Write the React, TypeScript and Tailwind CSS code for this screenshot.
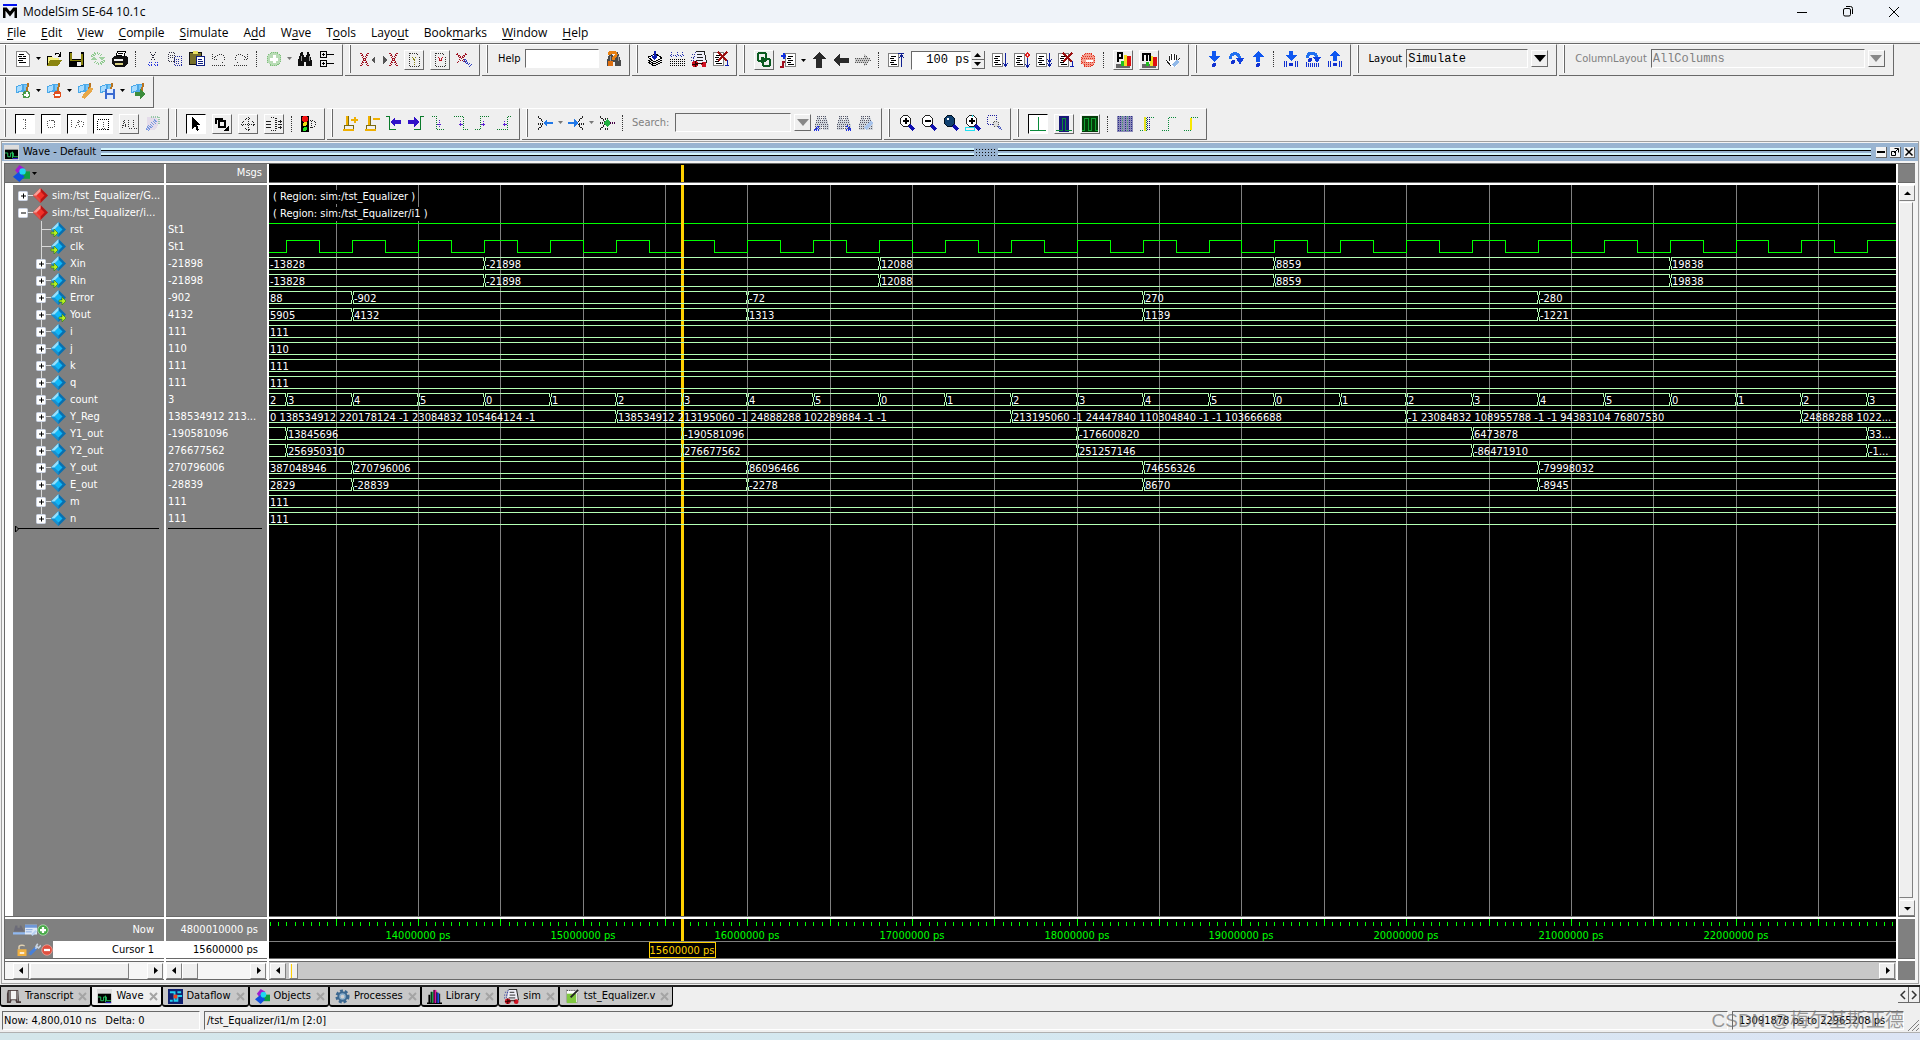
import type { ReactNode } from 'react';
import { clsx } from 'clsx';

type Stroke = { d: string; c?: string; w?: number; dots?: boolean };

const L = ({ d, c = '#000', w = 1, dots }: Stroke) => (
  <path d={d} fill="none" stroke={c} strokeWidth={w} strokeDasharray={dots ? '1 1' : undefined} />
);
const F = ({ d, c = '#000' }: { d: string; c?: string }) => <path d={d} fill={c} />;

const Page = ({ x = 1 }: { x?: number }) => (
  <>
    <rect x={x + 0.5} y="1.5" width="10" height="13" fill="#fff" stroke="#808080" />
    <L d={`M${x + 3} 4.5h5M${x + 2} 6.5h4M${x + 3} 8.5h5M${x + 2} 10.5h4M${x + 3} 12.5h6`} />
  </>
);
const Flag = () => (
  <>
    <F d="M1 3l7-2 5 0v7l-6 1-6 1z" c="#4aa8e8" />
    <F d="M2 4l5-2v5l-5 2z" c="#a8dcff" />
    <F d="M9 2l3 0v5l-3 0z" c="#78c4f4" />
    <L d="M13.500 0L10.500 12" c="#b87420" w={2} />
  </>
);
const Lens = () => (
  <>
    <L d="M10 10l5 5" c="#1010b0" w={3} />
    <circle cx="6.500" cy="6" r="5.500" fill="#fff" stroke="#222" />
  </>
);
const Cart = () => (
  <>
    <F d="M5 1h8l2 10H3z" c="#f0f0fa" />
    <L d="M5 .500h9M13.500 1l2 11M6 3.500h5M6 6.500h6M5 9.500h7" c="#222" />
    <L d="M4.500 1L2 11M1 3.500h3M0 6.500h3M0 9.500h2" c="#3038a0" dots />
    <circle cx="4" cy="13" r="3" fill="#d01020" />
    <circle cx="13" cy="13.500" r="2.500" fill="#d01020" />
    <L d="M4 12.500h8M4 10v6M1 13.500h6" c="#300" />
  </>
);
const Binoc = ({ c = '#111', dots = false }) => (
  <>
    <F d="M4 1h2v3h1v2h2V4h1V1h2l3 9v5H9v-4H7v4H1v-5z" c={dots ? '#d0d6dc' : c} />
    {dots && <L d="M3 1.500h10M3 3.500h10M2 5.500h12M2 7.500h12M1 9.500h14M1 11.500h14M1 13.500h14" c="#556" dots />}
    {!dots && <L d="M4.500 5v5M12.500 5v5" c="#999" />}
  </>
);
const Edge = ({ d, arrow }: { d: string; arrow: string }) => (
  <>
    <L d={d} c="#0a7a2a" dots />
    <L d={arrow} c="#5a20d0" dots />
    <L d="M7 9.500h4" c="#5a20d0" />
  </>
);
const Shapes = () => (
  <>
    <F d="M6 0l5 3-6 6-3-4z" c="#a21cd0" />
    <F d="M8 6h8v7H8z" c="#10a040" />
    <F d="M6 6l5 5-5 5-6-5z" c="#1050e0" />
    <circle cx="9" cy="6" r="3" fill="#20d8f0" />
  </>
);
const WaveGlyph = () => (
  <>
    <F d="M0 0h16v16H0z" c="#dcdcdc" />
    <F d="M1 5h14v10H1z" />
    <L d="M1 8.500h3v4h3v-4h3v4h5M9 7v7" c="#28c864" />
    <L d="M9 14.500h6" c="#3020e0" />
  </>
);

const ICONS: Record<string, ReactNode> = {
  page: <><F d="M1 0h10l4 4v12H1z" c="#fff" /><L d="M1.500 0v15.500H14.500V4L11 .500H1" c="#888" /><L d="M4 3.500h5M3 5.500h4M8 5.500h3M4 7.500h7M3 9.500h5M4 11.500h7" /></>,
  open: <><F d="M1 5h5l1 2h6v2H5l-3 5H1z" c="#f4f080" /><F d="M4 9h12l-4 6H1z" c="#8a8410" /><L d="M1.500 14V5.500h4M9 3.500c2-2 4-1 5 1M14.500 1v4h-3" /></>,
  save: <><F d="M1 1h15v15H1z" /><F d="M2 2h2v7H2zM13 3h2v11h-2z" c="#8a8410" /><F d="M4 1h9v7H4z" c="#efefef" /><F d="M2 9h13v1H2z" c="#8a8410" /><F d="M9 11h4v4H9z" c="#efefef" /></>,
  reload: <><L d="M2 6c2-5 8-4 9-1M14 9c-2 5-8 4-9 1" c="#8fcb8f" w={3} dots /><F d="M9 6h6l-3 4zM1 9h6L4 5z" c="#a0d0a0" /></>,
  print: <><F d="M5 1h8l-2 6H3z" c="#fff" /><L d="M5.500.500h8l-2 6h-8zM6 2.500h5M5 4.500h5" /><F d="M0 7l3-2h11l2 2v5l-3 4H3l-3-3z" c="#111" /><F d="M2 8h9v2H2z" c="#eee" /><F d="M3 12h8v2H3z" c="#d8d080" /></>,
  cut: <><L d="M5 1l5 9M11 1l-5 9" c="#223" dots /><L d="M3.500 11.500h3v3h-3zM9.500 11.500h3v3h-3z" c="#2030e0" dots /></>,
  copy: <><L d="M1.500 1.500h6v9h-6zM3 4.500h4M3 6.500h4" c="#334" dots /><L d="M7.500 5.500h7v9h-7zM9 8.500h4M9 10.500h4M9 12.500h4" c="#2028a0" dots /></>,
  paste: <><F d="M0 1h13v13H0z" c="#111" /><F d="M1 2h11v11H1z" c="#77702a" /><F d="M4 0h5v3H4z" c="#e8e060" /><F d="M7 5h9v10H7z" c="#102080" /><F d="M8 6h7v8H8z" c="#fff" /><L d="M9 8.500h4M9 10.500h5M9 12.500h5" c="#102080" /></>,
  undo: <><L d="M1.500 3v5h5M3 7c3-5 11-4 11 1 0 2-2 3-4 4" c="#333" dots /><L d="M1 14.500h14" c="#333" dots /></>,
  redo: <><L d="M14.500 3v5h-5M13 7C10 2 2 3 2 8c0 2 2 3 4 4" c="#333" dots /><L d="M1 14.500h14" c="#333" dots /></>,
  add: <><circle cx="8" cy="8" r="7" fill="#b9dcb6" stroke="#7fbf7c" strokeDasharray="1 1" /><L d="M8 4v8M4 8h8" c="#fff" w={3} /></>,
  find: <Binoc />,
  tree: <><L d="M1.500.500h6v6h-6zM1.500 9.500h6v6h-6zM4.500 2v3M3 3.500h3M4.500 11v3M3 12.500h3M8 3.500h7M8 12.500h7" /></>,
  xl: <><L d="M1 1l7 13M8 1L1 14" c="#a01020" dots w={2} /><F d="M15 4v8l-4-4z" c="#555" /></>,
  xr: <><L d="M8 1l7 13M15 1L8 14" c="#a01020" dots w={2} /><F d="M1 4v8l4-4z" c="#555" /></>,
  pageq: <><L d="M3.500 1.500h7l3 3v10h-10z" c="#333" dots /><L d="M6 5l2 3 2-3M8.500 8v5" c="#8a8410" dots /></>,
  pagex: <><L d="M3.500 1.500h7l3 3v10h-10z" c="#333" dots /><L d="M6 5l5 6M11 5l-5 6" c="#c01020" dots /></>,
  xpen: <><L d="M1 2l9 9M10 2L1 11" c="#a01020" w={2} dots /><L d="M8 8l7 6" c="#3040c0" w={3} dots /></>,
  helpfind: <><Binoc c="#4a4a4a" /><L d="M3 4c0-4 8-4 7 0 0 2-3 2-3 5" c="#e88010" w={3} /><F d="M2 10h5v5H2z" c="#e07010" /></>,
  layers: <><F d="M1 6l8-3 6 4-8 4z" c="#fff" /><L d="M1 6l8-3 6 4-8 4zM1 9l6 4 8-4M1 11l6 4 8-4" /><L d="M7.500 0v7M5 4.500l2.500 3 2.500-3" c="#1020b0" w={2} /></>,
  stack: <><L d="M2.500 1v4M8.500 1v4M13.500 1v4M1 4l2 2 2-2M6 4l2 2 2-2M11 4l2 2 2-2" c="#2030b0" dots /><L d="M1 8.500h15M1 10.500h15M1 12.500h15M1 14.500h15" dots /></>,
  cart: <Cart />,
  pageX: <><Page x={0} /><L d="M5 1l9 9M14 1L5 10" c="#9a1010" w={2} /><L d="M14.500 9v5M12 14.500h4" c="#1020b0" /></>,
  chain: <><rect x="2" y="1" width="8" height="8" rx="2" fill="none" stroke="#0a5a20" strokeWidth="2" /><rect x="7" y="7" width="7" height="7" rx="2" fill="none" stroke="#0a5a20" strokeWidth="2" /><path d="M5 5h3v2H6v4H5z" fill="#0a5a20" /></>,
  restartp: <><Page x={5} /><L d="M3.500 7V1M1 3.500h5" c="#1030e0" w={2} /><L d="M0 14.500h3v-5h2" c="#a01020" w={2} /></>,
  up: <F d="M8 0l7 7h-4v9H5V7H1z" c="#2a2a2a" />,
  left: <F d="M0 8l7-6v4h9v5H7v3z" c="#2a2a2a" />,
  rightdim: <><F d="M16 8L9 2v4H0v5h9v3z" c="#c8c8c8" /><L d="M0 6.500h15M1 8.500h15M0 10.500h14M9 4.500h3M9 12.500h3" c="#555" dots /></>,
  runtop: <><Page x={0} /><L d="M10 1.500h6M13.500 2v13M11 6l2.500-3 2.500 3" c="#102090" w={1} /></>,
  run: <><Page x={0} /><L d="M13.500 1v13M11 11l2.500 3 2.500-3" c="#1020a0" /></>,
  runc: <><Page x={0} /><L d="M13.500 6v9M11 12l2.500 3 2.500-3" c="#1020a0" /><L d="M13.500 1l2 2-2 2-2-2z" c="#e02020" /></>,
  runa: <><Page x={0} /><L d="M13.500 1v13M11 7l2.500 3 2.500-3M11 11l2.500 3 2.500-3" c="#1020a0" /></>,
  stop: <><circle cx="8" cy="8" r="7" fill="#f4a090" stroke="#e03020" strokeDasharray="1 1" /><L d="M3 4.500h10M2 6.500h12M2 10.500h12M4 12.500h8" c="#e03020" dots /><L d="M6 8.500h7" c="#fff" w={2} /></>,
  perf: <><F d="M1 12h14v4H1z" c="#666" /><F d="M6 9h3v5H6z" c="#20c020" /><F d="M9 3h3v11H9z" c="#f0e020" /><F d="M12 4h4v10h-4z" c="#e01010" /><L d="M3 10V1h4v5H3" w={2} /></>,
  mem: <><F d="M1 12h14v4H1z" c="#666" /><F d="M5 10h3v4H5z" c="#20c020" /><F d="M9 4h3v10H9z" c="#f0e020" /><F d="M12 5h4v9h-4z" c="#e01010" /><L d="M2 9V2h7v7M5.500 2v7" w={2} /></>,
  hand: <><F d="M4 8V3h2V1h2v1h2v1h2v5l2-2 1 1-3 6-2 2H6L1 9l1-1z" c="#fff" /><L d="M4 9V3.500M6.500 8V1.500M9 8V1.500M11.500 8V3M12 9l3-3M1 8l5 6" c="#222" /><L d="M8 14l5-5" c="#90b8e8" w={4} /></>,
  stepin: <><F d="M6 0h4v5h4l-6 6-6-6h4z" c="#1058f0" /><circle cx="8" cy="14" r="2" fill="#1030d0" /></>,
  stepover: <><L d="M2 8c1-7 9-7 10 0" c="#2070f0" w={3} /><F d="M8 7h8l-4 7z" c="#1040e0" /><circle cx="5" cy="11" r="2" fill="#1030d0" /></>,
  stepout: <><F d="M6 11h4V6h4L8 0 2 6h4z" c="#1058f0" /><circle cx="8" cy="14" r="2" fill="#1030d0" /></>,
  cin: <><F d="M6 0h4v4h4l-6 6-6-6h4z" c="#1058f0" /><L d="M1.500 10v6M3.500 10v6M12.500 10v6M14.500 10v6" c="#1030d0" /><circle cx="8" cy="13.500" r="2" fill="#1030d0" /></>,
  cover: <><L d="M2 7c1-7 9-6 10 0" c="#2070f0" w={3} /><F d="M8 6h8l-4 6z" c="#1040e0" /><circle cx="5" cy="9" r="2" fill="#1030d0" /><L d="M1.500 11v5M3.500 12v4M5.500 12v4M7.500 12v4M9.500 12v4M11.500 12v4M13.500 12v4" c="#1030d0" /></>,
  cout: <><F d="M6 10h4V5h4L8 0 2 5h4z" c="#1058f0" /><L d="M1.500 10v6M3.500 10v6M12.500 10v6M14.500 10v6" c="#1030d0" /><circle cx="8" cy="13.500" r="2" fill="#1030d0" /></>,
  bmadd: <><Flag /><circle cx="11.500" cy="11.500" r="4" fill="#4a9a48" /><L d="M11.500 9v5M9 11.500h5" c="#fff" w={2} /></>,
  bmdel: <><Flag /><circle cx="11.500" cy="11.500" r="4" fill="#e05020" /><L d="M9 11.500h5" c="#fff" w={2} /></>,
  bmedit: <><Flag /><L d="M6 15l9-10" c="#e8a848" w={4} /></>,
  bmsave: <><Flag /><F d="M6 6h10v10H6z" c="#3a6ad0" /><F d="M8 6h6v4H8zM8 12h6v4H8z" c="#e0ecff" /></>,
  bmgo: <><Flag /><F d="M5 9h5V6l6 5-6 5v-3H5z" c="#3c8c3c" /></>,
  fin: <L d="M6 3.500h4M8.500 4v8M6 12.500h4" c="#555" dots />,
  fout: <circle cx="8" cy="8" r="4" fill="none" stroke="#555" strokeDasharray="1 1" />,
  fio: <><L d="M2.500 4v8M6 12l4-8" c="#555" dots /><circle cx="12" cy="8" r="3" fill="none" stroke="#555" strokeDasharray="1 1" /></>,
  fint: <><L d="M2.500 3.500h11v10h-11z" dots /><L d="M8.500 6v6M7 12.500h3" c="#555" dots /></>,
  fall: <L d="M1 12l2-8 2 8M2 9.500h3M7.500 4v8h3M12.500 4v8h3" c="#333" dots />,
  fpen: <><F d="M2 1h8l5 5-5 8H2z" c="#e4dcea" /><L d="M2 14L11 4" c="#7898e0" w={4} dots /><L d="M6 1h8v8" c="#98c8a8" w={2} dots /></>,
  select: <F d="M4 1v12l3-3 2 5 2-1-2-5h4z" />,
  zoomsel: <><L d="M1.500 8V2.500H9" w={2} /><rect x="5" y="5" width="6" height="6" fill="none" stroke="#000" strokeWidth="2" /><F d="M15 9v6H9z" /></>,
  pan: <><L d="M8.500 1v14M1 8.500h14M5 4l3-3 3 3M5 12l3 3 3-3M4 5L1 8l3 3M12 5l3 3-3 3" c="#222" dots /></>,
  twocur: <><L d="M5 1.500h4v13H5M10.500 2v12" c="#222" dots /><L d="M0 5.500h5M0 8.500h5M0 11.500h5M12 5.500h4M12 8.500h4M12 11.500h4M14.500 4v3M14.500 10v3" c="#222" /></>,
  traffic: <><F d="M0 0h8v16H0z" /><circle cx="4" cy="3" r="3" fill="#f01010" /><circle cx="4" cy="8" r="2" fill="#f0e010" /><circle cx="4" cy="13" r="2" fill="#20e020" /><L d="M9 4.500h2c5 0 5 7 0 7H9M10.500 5v7" c="#222" dots /></>,
  curadd: <><L d="M6.500 1v9M2 10.500h9M2.500 10v4.500h9V10" c="#7a6a10" /><L d="M5 1v9M1 14.500h11M9 5h7M13 2v6" c="#f0b000" w={2} /></>,
  curdel: <><L d="M6.500 1v9M2 10.500h9M2.500 10v4.500h9V10" c="#7a6a10" /><L d="M5 1v9M1 14.500h11M9 4h7" c="#f0b000" w={2} /></>,
  prevt: <><L d="M0 1.500h3.500v13H10" c="#0a7a2a" /><F d="M4 7l5-5v3h6v4H9v3z" c="#3010c8" /></>,
  nextt: <><L d="M16 1.500h-3.500v13H6" c="#0a7a2a" /><F d="M11 7L6 2v3H0v4h6v3z" c="#3010c8" /></>,
  e1: <Edge d="M2 1.500h4.500v13h8" arrow="M9.500 5v7" />,
  e2: <Edge d="M2 1.500h9.500v13h4" arrow="M8.500 6v6" />,
  e3: <Edge d="M1 14.500h5.500v-13h8" arrow="M9.500 6v6" />,
  e4: <Edge d="M1 14.500h10.500v-13h4" arrow="M8.500 6v6" />,
  bl: <><L d="M1 2l5 4M1 8.500h5M1 14l5-4" c="#222" w={2} dots /><F d="M6 8l4-4v3h6v2h-6v3z" c="#2078e8" /></>,
  br: <><L d="M15 2l-5 4M15 14l-5-4M11 8.500h5" c="#222" w={2} dots /><F d="M10 8L6 4v3H0v2h6v3z" c="#2078e8" /></>,
  bb: <><L d="M1 2l5 4M1 14l5-4M1 8h4M6 3.500h4M6 13.500h4" c="#222" w={2} dots /><F d="M8 4l4 4-4 4-4-4z" c="#20b040" /><L d="M11 8h5" c="#404" w={2} dots /></>,
  sl: <><Binoc dots /><L d="M1 15l4-4M0 14.500h6" c="#2030e0" w={2} dots /></>,
  sr: <><Binoc dots /><L d="M11 11l4 4M10 14.500h6" c="#2030e0" w={2} dots /></>,
  sopt: <><Binoc dots /><L d="M7 14l7-7" c="#a8c4ec" w={4} /></>,
  zin: <><Lens /><L d="M6.500 3v6M4 6h6" w={2} /></>,
  zout: <><Lens /><L d="M4 6h6" w={2} /></>,
  zfull: <><Lens /><circle cx="6.500" cy="6" r="5.500" fill="#104070" stroke="#012" /><circle cx="5" cy="4" r="1" fill="#fff" /></>,
  zcur: <><Lens /><L d="M7 3v6M4 6h6" w={2} /><L d="M.500 12.500h9v3h-9zM7.500 0v2" c="#20e0f0" /></>,
  zsel: <><L d="M.500.500h9v9h-9z" c="#2020a0" dots /><L d="M10 10l5 5" c="#5060c0" w={2} dots /><circle cx="9" cy="9" r="3" fill="#ddd" stroke="#555" strokeDasharray="1 1" /></>,
  w1: <><F d="M0 0h16v16H0z" c="#fff" /><L d="M0 14.500h16M8.500 1v13" c="#0a8a3a" /></>,
  w2: <><F d="M3 0h10v16H3z" c="#181878" /><L d="M0 14.500h6.500v-12h3v12H16" c="#0a8a3a" /></>,
  w3: <><F d="M0 0h16v16H0z" c="#033c08" /><L d="M0 14.500h2.500v-12h4v12h3v-12h4v12H16" c="#10a030" /></>,
  w4: <><F d="M0 0h16v16H0z" c="#8c8cb8" /><L d="M1.500 0v16M3.500 0v16M8.500 0v16M12.500 0v16M14.500 0v16" c="#282888" dots /><L d="M5.500 0v16M10.500 0v16" c="#40a060" dots /></>,
  w5: <><L d="M1 14.500h6v-13h8" c="#0a8a3a" dots /><L d="M6 1v14" c="#e8e020" w={2} /><L d="M8.500 1v14M10.500 1v14" c="#202080" dots /></>,
  w6: <L d="M1 14.500h6.500v-13h8" c="#0a8a3a" dots />,
  w7: <><L d="M1 14.500h7v-13h7" c="#0a8a3a" dots /><L d="M8 2v12" c="#f8e800" w={2} /></>,
  wave: <WaveGlyph />,
  objects: <Shapes />,
  transcript: <><F d="M2 1h11l1 12h2v2h-5l-1-3H6l-1 3H1V5z" c="#4a3c3c" /><F d="M5 2h6v9H5z" c="#f4f4f4" /><L d="M3.500 2v11M12.500 2v11" c="#999" /></>,
  dataflow: <><F d="M0 0h16v16H0z" c="#102070" /><L d="M2 3.500h5v9h3v-5h5M2 12.500h3M10 3.500h4" c="#20d0f0" w={2} /><F d="M6 6h4v4H6z" c="#f04020" /></>,
  gear: <><circle cx="8" cy="8" r="6" fill="none" stroke="#3c6890" strokeWidth="3" strokeDasharray="3 2" /><circle cx="8" cy="8" r="4.500" fill="#8cb0cc" stroke="#3c6890" strokeWidth="2" /><circle cx="8" cy="8" r="2" fill="#d0d0d0" /></>,
  library: <><L d="M2.500 6v9M0 15.500h16" w={2} /><F d="M4 3h3v12H4z" c="#10a040" /><F d="M7 1h3v14H7z" c="#e010a0" /><F d="M10 4h3v11h-3z" c="#2050e0" /><L d="M4.500 3v12M7.500 1v14M10.500 3v12M13.500 5v10" /></>,
  file: <><F d="M1 1h13v14H1z" c="#fff" /><L d="M1.500.500v14h12V4" c="#999" /><F d="M2 5h10v10H2z" c="#80c840" /><L d="M6 9l8-8" c="#222" w={2} /><L d="M2 1.500h9" dots /></>,
  nowbin: <><F d="M3 2h3v3h3V2h2l4 8H1z" c="#6c6c78" /><L d="M0 12.500h16" c="#90b8f0" w={3} /></>,
  table: <><F d="M0 1h16v13H0z" c="#dfe9f8" /><F d="M0 1h16v4H0z" c="#6f98d8" /><L d="M1 7.500h9M1 10.500h8" c="#6f98d8" /><L d="M9 15l6-6" c="#b8d0f0" w={3} /></>,
  plus: <><circle cx="8" cy="8" r="7" fill="#48a848" stroke="#b8e0b8" /><L d="M8 4v8M4 8h8" c="#fff" w={3} /></>,
  lock: <><F d="M2 7h12v9H2z" c="#f0b040" /><L d="M4 7V4c0-3 7-3 7-1" c="#e0d0b0" w={2} /><L d="M5 12h6" c="#fff" w={2} /></>,
  wrench: <><L d="M2 14l8-8" c="#4880d8" w={4} /><L d="M9 7l3-3M12 1l-2 3 3 2 3-3" c="#c8d4e4" w={2} /></>,
  minus: <><circle cx="8" cy="8" r="7" fill="#e05040" stroke="#f0a8a0" /><L d="M4 8h8" c="#fff" w={3} /></>,
};

const Icon = ({ n, size = 16, crisp }: { n: string; size?: number; crisp?: boolean }) => (
  <svg
    viewBox="0 0 16 16"
    width={size}
    height={size}
    className="shrink-0"
    shapeRendering={crisp ? 'crispEdges' : 'auto'}
    aria-hidden="true"
  >
    {ICONS[n]}
  </svg>
);

/* ---- toolbar parts ---- */

const Tool = ({ n, label, box }: { n: string; label: string; box?: 'up' | 'down' }) => (
  <button
    type="button"
    aria-label={label}
    className={clsx(
      'flex h-5 shrink-0 items-center justify-center',
      box ? 'mx-[3px] w-5 border' : 'w-[22px]',
      box === 'up' && 'border-t-white border-l-white border-r-[#696969] border-b-[#696969]',
      box === 'down' && 'border-t-black border-l-black border-r-white border-b-white bg-white',
    )}
  >
    <Icon n={n} crisp />
  </button>
);

const Drop = ({ label, dim }: { label: string; dim?: boolean }) => (
  <button type="button" aria-label={label} className="flex h-5 w-[9px] shrink-0 items-center justify-center">
    <svg width="5" height="3" viewBox="0 0 5 3"><path d="M0 0h5L2.500 3z" fill={dim ? '#777' : '#000'} /></svg>
  </button>
);

const Sep = () => <span className="mr-[6px] ml-1 h-4 w-px shrink-0 border-l border-dotted border-[#333]" />;

const Group = ({ children, high }: { children: ReactNode; high?: boolean }) => (
  <div
    className={clsx(
      'mr-[2px] flex h-8 shrink-0 items-center border-t border-r border-b border-t-white border-r-[#696969] border-b-[#696969] pr-1',
      high && 'pb-[3px]',
    )}
  >
    <span className="mr-[6px] ml-1 h-7 w-[2px] shrink-0 self-start border-r border-l border-r-[#696969] border-l-white" />
    {children}
  </div>
);

const BigDrop = ({ label, dim }: { label: string; dim?: boolean }) => (
  <button
    type="button"
    aria-label={label}
    className="ml-[3px] flex h-[17px] w-[17px] shrink-0 items-center justify-center border border-t-white border-l-white border-r-[#696969] border-b-[#696969]"
  >
    <svg width="12" height="7" viewBox="0 0 12 7"><path d="M0 0h12L6 7z" fill={dim ? '#888' : '#000'} /></svg>
  </button>
);

const sunken = 'border border-t-[#696969] border-l-[#696969] border-r-white border-b-white';

/* ---- signals ---- */

type Signal = {
  name: string;
  value: string;
  dir?: 'in' | 'out';
  // [time in us, label] pairs, the first one opens the window
  bus?: [number, string][];
};

const T0 = 13.091878;
const T1 = 22.965208;
const WIDTH = 1626;
const px = (t: number) => Math.floor(((t - T0) / (T1 - T0)) * WIDTH);

const count: [number, string][] = [[T0, '2']];
for (let i = 0; i < 25; i++) count.push([13.2 + i * 0.4, String((i + 3) % 6)]);

const SIGNALS: Signal[] = [
  { name: 'rst', value: 'St1', dir: 'in' },
  { name: 'clk', value: 'St1', dir: 'in' },
  { name: 'Xin', value: '-21898', dir: 'in', bus: [[T0, '-13828'], [14.4, '-21898'], [16.8, '12088'], [19.2, '8859'], [21.6, '19838']] },
  { name: 'Rin', value: '-21898', dir: 'in', bus: [[T0, '-13828'], [14.4, '-21898'], [16.8, '12088'], [19.2, '8859'], [21.6, '19838']] },
  { name: 'Error', value: '-902', dir: 'out', bus: [[T0, '88'], [13.6, '-902'], [16, '-72'], [18.4, '270'], [20.8, '-280']] },
  { name: 'Yout', value: '4132', dir: 'out', bus: [[T0, '5905'], [13.6, '4132'], [16, '1313'], [18.4, '1139'], [20.8, '-1221']] },
  { name: 'i', value: '111', bus: [[T0, '111']] },
  { name: 'j', value: '110', bus: [[T0, '110']] },
  { name: 'k', value: '111', bus: [[T0, '111']] },
  { name: 'q', value: '111', bus: [[T0, '111']] },
  { name: 'count', value: '3', bus: count },
  {
    name: 'Y_Reg',
    value: '138534912 213...',
    bus: [
      [T0, '0 138534912 220178124 -1 23084832 105464124 -1'],
      [15.2, '138534912 213195060 -1 24888288 102289884 -1 -1'],
      [17.6, '213195060 -1 24447840 110304840 -1 -1 103666688'],
      [20, '-1 23084832 108955788 -1 -1 94383104 76807530'],
      [22.4, '24888288 1022...'],
    ],
  },
  { name: 'Y1_out', value: '-190581096', bus: [[T0, ''], [13.2, '13845696'], [15.6, '-190581096'], [18, '-176600820'], [20.4, '6473878'], [22.8, '33...']] },
  { name: 'Y2_out', value: '276677562', bus: [[T0, ''], [13.2, '256950310'], [15.6, '276677562'], [18, '251257146'], [20.4, '-86471910'], [22.8, '-1...']] },
  { name: 'Y_out', value: '270796006', bus: [[T0, '387048946'], [13.6, '270796006'], [16, '86096466'], [18.4, '74656326'], [20.8, '-79998032']] },
  { name: 'E_out', value: '-28839', bus: [[T0, '2829'], [13.6, '-28839'], [16, '-2278'], [18.4, '8670'], [20.8, '-8945']] },
  { name: 'm', value: '111', bus: [[T0, '111']] },
  { name: 'n', value: '111', bus: [[T0, '111']] },
];

const ROW = 17;
const CURSOR = px(15.6);

const Bus = ({ row, bus }: { row: number; bus: [number, string][] }) => {
  const top = row * ROW + 4.5;
  return (
    <g>
      {bus.map(([t, text], i) => {
        const a = i === 0 ? -1 : px(t);
        const b = i + 1 < bus.length ? px(bus[i + 1][0]) : 4000;
        const open = i === 0 ? `M0 ${top}` : `M${a + 1.5} ${top + 12}v-3l-1 -1v-4l1 -1v-3`;
        return (
          <g key={t}>
            <path
              d={`${open}H${b - 0.5}v3l1 1v4l-1 1v3H${i === 0 ? 0 : a + 1.5}`}
              fill="none"
              stroke="#b4ffb4"
            />
            <text x={a + 2} y={top + 10.5} fill="#fff">{text}</text>
          </g>
        );
      })}
    </g>
  );
};

const clockPath = () => {
  let d = 'M0 67.500';
  for (let t = 13.2; t < 23; t += 0.4) d += `H${px(t) + 0.5}V55.500H${px(t + 0.2) + 0.5}V67.500`;
  return d + 'H4000';
};

const gridTimes = Array.from({ length: 20 }, (_, i) => 13.5 + i * 0.5).filter((t) => t < T1);
const tickTimes = Array.from({ length: 198 }, (_, i) => Math.round((13.1 + i * 0.05) * 100) / 100);

const WaveCanvas = () => (
  <svg className="absolute inset-0 h-full w-full text-[11px]" shapeRendering="crispEdges">
    {gridTimes.map((t) => (
      <line key={t} x1={px(t) + 0.5} x2={px(t) + 0.5} y1="0" y2="100%" stroke="#808080" />
    ))}
    <rect x="2" y="5" width="144" height="14" />
    <rect x="2" y="22" width="156" height="14" />
    <text x="4" y="15" fill="#fff">( Region: sim:/tst_Equalizer )</text>
    <text x="4" y="32" fill="#fff">( Region: sim:/tst_Equalizer/i1 )</text>
    <path d="M0 38.500H4000" stroke="#00ff00" />
    <path d={clockPath()} fill="none" stroke="#00ff00" />
    <rect x={CURSOR - 1} y="0" width="3" height="100%" fill="#ffd000" />
    {SIGNALS.map((s, i) => s.bus && <Bus key={s.name} row={i + 2} bus={s.bus} />)}
  </svg>
);

const Timeline = () => (
  <svg className="absolute inset-0 h-full w-full text-[11px]" shapeRendering="crispEdges">
    {tickTimes.map((t) => (
      <line
        key={t}
        x1={px(t) + 0.5}
        x2={px(t) + 0.5}
        y1={Math.round(t * 100) % 50 === 0 ? 0 : 3}
        y2="7"
        stroke="#00ff00"
      />
    ))}
    {[14, 15, 16, 17, 18, 19, 20, 21, 22].map((t) => (
      <text key={t} x={px(t)} y="20" textAnchor="middle" fill="#00ff00">{t}000000 ps</text>
    ))}
    <rect x={CURSOR - 1} y="0" width="3" height="100%" fill="#ffd000" />
  </svg>
);

/* ---- signal tree ---- */

const Expander = ({ x, open }: { x: number; open?: boolean }) => (
  <>
    <rect x={x + 0.5} y="4.500" width="9" height="9" rx="1" fill="#fff" stroke="#ccd4e4" />
    <path d={open ? `M${x + 3} 9h5` : `M${x + 3} 9h5M${x + 5.5} 6.500v5`} stroke="#000" />
  </>
);

const Diamond = ({ x, hot }: { x: number; hot?: boolean }) => (
  <>
    <path d={`M${x} 1l7.500 7.500-7.500 7.500-7.500-7.500z`} fill={hot ? '#b81414' : '#0870b0'} />
    <path d={`M${x} 1v15l-7.500-7.500z`} fill={hot ? '#e05048' : '#1890d0'} />
    <path d={`M${x} 1v4l-3.500 3.500h-4z`} fill={hot ? '#f8a098' : '#98e0fc'} />
    <path d={`M${x} 4.500l4 4-4 4-4-4z`} fill={hot ? '#f03028' : '#10b8f8'} />
  </>
);

const Region = ({ name, open }: { name: string; open?: boolean }) => (
  <li className="flex h-[17px] items-center">
    <svg width="39" height="17" className="shrink-0">
      <path d="M15 8.500h6" stroke="#e0e0e0" />
      <Expander x={5} open={open} />
      <Diamond x={27.5} hot />
    </svg>
    <span className="leading-[17px]">{name}</span>
  </li>
);

const Leaf = ({ signal, last }: { signal: Signal; last?: boolean }) => (
  <li className="flex h-[17px] items-center">
    <svg width="57" height="17" className="shrink-0">
      <path d={`M28.500 0V${last ? 8 : 17}M28 8.500h10`} stroke="#d8d8d8" />
      {signal.bus && <Expander x={23} />}
      <Diamond x={45.5} />
      {signal.dir && (
        <path
          transform={signal.dir === 'in' ? 'translate(38 8)' : 'translate(46 8)'}
          d="M0 3h3V0l4 4-4 4V5H0z"
          fill="#b8f020"
          stroke="#287818"
          strokeWidth=".6"
        />
      )}
    </svg>
    <span className="leading-[17px]">{signal.name}</span>
  </li>
);

/* ---- panel scaffolding ---- */

const Pane = ({ className, children }: { className: string; children: ReactNode }) => (
  <div className={clsx('flex min-w-0 flex-col border-r-2 border-white', className)}>{children}</div>
);

const Rule = () => <div className="h-[3px] shrink-0 border-t border-b-2 border-t-[#696969] border-b-white" />;

const ScrollBtn = ({ dir, label }: { dir: 'left' | 'right' | 'up' | 'down'; label: string }) => {
  const d = { left: 'M6 1v7L2 4.500z', right: 'M3 1v7l4-3.500z', up: 'M1 6h7L4.500 2.500z', down: 'M1 3h7L4.500 6.500z' }[dir];
  return (
    <button
      type="button"
      aria-label={label}
      className="flex h-4 w-4 shrink-0 items-center justify-center border border-t-white border-l-white border-r-[#808080] border-b-[#808080] bg-[#efefef]"
    >
      <svg width="9" height="9"><path d={d} /></svg>
    </button>
  );
};

const Thumb = ({ className, children }: { className: string; children?: ReactNode }) => (
  <span className={clsx('h-4 shrink-0 border border-t-white border-l-white border-r-[#808080] border-b-[#808080] bg-[#efefef]', className)}>
    {children}
  </span>
);

const PaneBtn = ({ label, children }: { label: string; children: ReactNode }) => (
  <button
    type="button"
    aria-label={label}
    className="flex h-[11px] w-[11px] shrink-0 items-center justify-center border-r border-b border-[#696969] bg-[#f4f4f4]"
  >
    <svg width="10" height="10" viewBox="0 0 10 10" fill="none" stroke="#000">{children}</svg>
  </button>
);

const Grooves = () => (
  <span className="flex flex-1 flex-col gap-[2px]">
    <span className="h-[3px] border-t-2 border-b border-t-[#d4f6ff] border-b-black" />
    <span className="h-[3px] border-t-2 border-b border-t-[#d4f6ff] border-b-black" />
  </span>
);

const MENUS: [string, number][] = [
  ['File', 0], ['Edit', 0], ['View', 0], ['Compile', 0], ['Simulate', 0], ['Add', 1],
  ['Wave', 1], ['Tools', 1], ['Layout', 4], ['Bookmarks', 4], ['Window', 0], ['Help', 0],
];

const TABS = [
  { icon: 'transcript', name: 'Transcript' },
  { icon: 'wave', name: 'Wave' },
  { icon: 'dataflow', name: 'Dataflow' },
  { icon: 'objects', name: 'Objects' },
  { icon: 'gear', name: 'Processes' },
  { icon: 'library', name: 'Library' },
  { icon: 'cart', name: 'sim' },
  { icon: 'file', name: 'tst_Equalizer.v' },
];

function TitleBar() {
  return (
    <header className="flex h-[23px] shrink-0 items-center bg-[#eff3f9] pl-[3px] font-['Open_Sans','Noto_Sans',sans-serif] text-[12px]">
      <svg width="14" height="16" viewBox="0 0 14 16">
        <path d="M0 0h14v2H0z" fill="#0010f0" />
        <path d="M1 14V5h2l4 5 4-5h2v9" fill="none" stroke="#000" strokeWidth="3" />
      </svg>
      <h1 className="ml-[6px]">ModelSim SE-64 10.1c</h1>
      <div className="mr-[3px] ml-auto flex items-center">
        <button type="button" aria-label="Minimize" className="flex h-5 w-[46px] items-center justify-center">
          <svg width="10" height="10" stroke="#000"><path d="M0 5.500h10" /></svg>
        </button>
        <button type="button" aria-label="Restore" className="flex h-5 w-[46px] items-center justify-center">
          <svg width="11" height="11" fill="none" stroke="#000">
            <rect x=".5" y="2.500" width="7" height="7.500" rx="1.500" />
            <path d="M3 .500h4.500q2 0 2 2V8" />
          </svg>
        </button>
        <button type="button" aria-label="Close" className="flex h-5 w-[46px] items-center justify-center">
          <svg width="10" height="10" stroke="#000"><path d="M0 0l10 10M10 0L0 10" /></svg>
        </button>
      </div>
    </header>
  );
}

function Toolbars() {
  return (
    <div className="shrink-0 border-t border-[#696969]">
      <div className="flex">
        <Group high>
          <Tool n="page" label="New" /><Drop label="New options" />
          <Tool n="open" label="Open" /><Tool n="save" label="Save" /><Tool n="reload" label="Reload" /><Tool n="print" label="Print" />
          <Sep />
          <Tool n="cut" label="Cut" /><Tool n="copy" label="Copy" /><Tool n="paste" label="Paste" /><Tool n="undo" label="Undo" /><Tool n="redo" label="Redo" />
          <Sep />
          <Tool n="add" label="Add" /><Drop label="Add options" dim /><Tool n="find" label="Find" /><Tool n="tree" label="Expand tree" />
        </Group>
        <Group>
          <Tool n="xl" label="Previous unknown" /><Tool n="xr" label="Next unknown" />
          <Tool n="pageq" label="Show cause" box="up" /><Tool n="pagex" label="Show drivers" box="up" />
          <Tool n="xpen" label="Clear highlights" />
        </Group>
        <Group high>
          <label htmlFor="help" className="ml-1">Help</label>
          <input id="help" className={clsx('mx-1 h-[19px] w-[74px] bg-white', sunken)} />
          <Tool n="helpfind" label="Search help" />
        </Group>
        <Group high>
          <Tool n="layers" label="Compile" /><Tool n="stack" label="Compile all" /><Tool n="cart" label="Simulate" /><Tool n="pageX" label="Break" />
        </Group>
        <Group>
          <Tool n="chain" label="Environment" box="up" />
          <Tool n="restartp" label="Restart" /><Drop label="Restart options" />
          <Tool n="up" label="Up" /><Tool n="left" label="Back" /><Tool n="rightdim" label="Forward" />
          <Sep />
          <Tool n="runtop" label="Restart run" />
          <input
            aria-label="Run length"
            defaultValue="100 ps"
            className={clsx("mr-px ml-1 h-[19px] w-[60px] bg-white text-right font-['Liberation_Mono',monospace] text-[12px]", sunken)}
          />
          <div className="mr-1 flex flex-col">
            <button type="button" aria-label="Increase" className="flex h-[9px] w-[13px] items-center justify-center border-r border-b border-[#696969]">
              <svg width="7" height="4"><path d="M0 4h7L3.500 0z" /></svg>
            </button>
            <button type="button" aria-label="Decrease" className="flex h-[9px] w-[13px] items-center justify-center border-r border-b border-[#696969]">
              <svg width="7" height="4"><path d="M0 0h7L3.500 4z" /></svg>
            </button>
          </div>
          <Tool n="run" label="Run" /><Tool n="runc" label="Continue run" /><Tool n="runa" label="Run all" /><Tool n="pageX" label="Break run" /><Tool n="stop" label="Stop" />
          <Sep />
          <Tool n="perf" label="Performance profile" box="up" /><Tool n="mem" label="Memory profile" box="up" /><Tool n="hand" label="Edit breakpoints" />
        </Group>
        <Group high>
          <Tool n="stepin" label="Step into" /><Tool n="stepover" label="Step over" /><Tool n="stepout" label="Step out" />
          <Sep />
          <Tool n="cin" label="Step into current" /><Tool n="cover" label="Step over current" /><Tool n="cout" label="Step out current" />
        </Group>
        <Group high>
          <label htmlFor="layout" className="mx-1">Layout</label>
          <select id="layout" className={clsx("h-[19px] w-[122px] appearance-none pl-px font-['Liberation_Mono',monospace] text-[12px]", sunken)}>
            <option>Simulate</option>
          </select>
          <BigDrop label="Open layouts" />
          <span className="w-1" />
        </Group>
        <Group high>
          <label htmlFor="columns" className="mx-1 text-[#808080]">ColumnLayout</label>
          <select id="columns" disabled className={clsx("h-[19px] w-[214px] appearance-none pl-px font-['Liberation_Mono',monospace] text-[12px] text-[#808080]", sunken)}>
            <option>AllColumns</option>
          </select>
          <BigDrop label="Open column layouts" dim />
          <span className="w-1" />
        </Group>
      </div>
      <div className="flex">
        <Group high>
          <Tool n="bmadd" label="Add bookmark" /><Drop label="Add bookmark options" />
          <Tool n="bmdel" label="Delete bookmark" /><Drop label="Delete bookmark options" />
          <Tool n="bmedit" label="Manage bookmarks" />
          <Tool n="bmsave" label="Save bookmarks" /><Drop label="Save bookmark options" />
          <Tool n="bmgo" label="Go to bookmark" />
        </Group>
      </div>
      <div className="flex">
        <Group>
          <Tool n="fin" label="Inputs" box="down" /><Tool n="fout" label="Outputs" box="down" /><Tool n="fio" label="Inouts" box="down" /><Tool n="fint" label="Internals" box="down" />
          <Tool n="fall" label="All" box="up" /><Tool n="fpen" label="Custom filter" />
        </Group>
        <Group>
          <Tool n="select" label="Select mode" box="down" /><Tool n="zoomsel" label="Zoom mode" box="up" /><Tool n="pan" label="Pan mode" box="up" /><Tool n="twocur" label="Two cursor mode" box="up" />
          <Sep />
          <Tool n="traffic" label="Stop drawing" />
        </Group>
        <Group high>
          <Tool n="curadd" label="Insert cursor" /><Tool n="curdel" label="Delete cursor" /><Tool n="prevt" label="Previous transition" /><Tool n="nextt" label="Next transition" />
          <Tool n="e1" label="Previous falling edge" /><Tool n="e2" label="Next falling edge" /><Tool n="e3" label="Previous rising edge" /><Tool n="e4" label="Next rising edge" />
        </Group>
        <Group high>
          <Tool n="bl" label="Collapse left" /><Drop label="Collapse left options" dim />
          <Tool n="br" label="Collapse right" /><Drop label="Collapse right options" dim />
          <Tool n="bb" label="Expand" />
          <Sep />
          <label htmlFor="search" className="ml-[3px] text-[#808080]">Search:</label>
          <input id="search" disabled className={clsx('ml-[6px] h-[19px] w-[116px]', sunken)} />
          <BigDrop label="Search history" dim />
          <Tool n="sl" label="Search backward" /><Tool n="sr" label="Search forward" /><Tool n="sopt" label="Search options" />
        </Group>
        <Group high>
          <Tool n="zin" label="Zoom in" /><Tool n="zout" label="Zoom out" /><Tool n="zfull" label="Zoom full" /><Tool n="zcur" label="Zoom on cursor" /><Tool n="zsel" label="Zoom other window" />
        </Group>
        <Group>
          <Tool n="w1" label="Edge view" box="down" /><Tool n="w2" label="Cycle view" box="up" /><Tool n="w3" label="Full view" box="up" />
          <Sep />
          <Tool n="w4" label="Event view" /><Tool n="w5" label="Delta view" /><Tool n="w6" label="Rising view" /><Tool n="w7" label="Active edge view" />
        </Group>
      </div>
    </div>
  );
}

function WavePanel() {
  return (
    <section className="mx-px mt-px flex min-h-0 flex-1 flex-col border border-[#a0a0a0] bg-[#f4f4f4]">
      <div className="mt-px flex h-[18px] shrink-0 items-center bg-[#99b4d1] pr-[3px] pl-[2px]">
        <Icon n="wave" size={15} />
        <h2 className="mr-[5px] ml-1">Wave - Default</h2>
        <Grooves />
        <span className="mx-px h-2 w-[22px] bg-[radial-gradient(#111_1px,transparent_1px)] bg-[size:3px_3px]" />
        <Grooves />
        <div className="ml-[5px] flex gap-[3px]">
          <PaneBtn label="Minimize pane"><path d="M1 5h8" strokeWidth="2" /></PaneBtn>
          <PaneBtn label="Undock pane"><path d="M1.500 4.500h4v4h-4zM4 6l4-4M4.500 1.500h4v4" /></PaneBtn>
          <PaneBtn label="Close pane"><path d="M1.500 1.500l7 7M8.500 1.500l-7 7" strokeWidth="1.500" /></PaneBtn>
        </div>
      </div>

      <div className="mt-[2px] mr-[3px] mb-[3px] ml-[2px] flex min-h-0 flex-1 border-t border-l border-[#696969]">
        <Pane className="w-[161px] shrink-0">
          <div className="flex h-[18px] shrink-0 items-center bg-[#808080] pl-2">
            <Icon n="objects" size={17} />
            <Drop label="Column options" />
          </div>
          <Rule />
          <div className="flex flex-1 bg-[#808080]">
            <div className="w-2 shrink-0 bg-white" />
            <div className="min-w-0 flex-1 pt-[2px] whitespace-nowrap text-white">
              <ul>
                <Region name="sim:/tst_Equalizer/G..." />
                <Region name="sim:/tst_Equalizer/i..." open />
                {SIGNALS.map((s, i) => <Leaf key={s.name} signal={s} last={i === SIGNALS.length - 1} />)}
              </ul>
              <svg width="146" height="8" className="-mt-[2px] ml-[2px]" fill="none" stroke="#000">
                <path d="M.500 1v6l3-3zM3 3.500h141" />
              </svg>
            </div>
          </div>
          <Rule />
          <div className="flex h-[22px] shrink-0 items-center bg-[#808080] pr-[10px] pl-2 text-white">
            <Icon n="nowbin" size={12} /><Icon n="table" size={12} /><Icon n="plus" size={12} />
            <span className="ml-auto">Now</span>
          </div>
          <div className="flex h-[17px] shrink-0 items-center bg-[#808080] pl-[11px]">
            <Icon n="lock" size={12} /><Icon n="wrench" size={13} /><Icon n="minus" size={12} />
            <span className="h-full flex-1 bg-white pr-[10px] text-right leading-[17px]">Cursor 1</span>
          </div>
          <Rule />
          <div className="flex h-[19px] shrink-0 items-center border-t border-b border-[#696969] bg-[#f6f6f6] pr-px pl-2">
            <ScrollBtn dir="left" label="Scroll names left" /><Thumb className="ml-px w-[99px]" />
            <span className="flex-1" /><ScrollBtn dir="right" label="Scroll names right" />
          </div>
        </Pane>

        <Pane className="w-[103px] shrink-0">
          <div className="h-[18px] shrink-0 bg-[#808080] pr-[5px] text-right leading-[18px] text-white">Msgs</div>
          <Rule />
          <div className="flex-1 bg-[#808080] pt-[36px] pl-[2px] whitespace-nowrap text-white">
            <ul>
              {SIGNALS.map((s) => <li key={s.name} className="h-[17px] leading-[17px]">{s.value}</li>)}
            </ul>
            <div className="mt-px mr-[5px] h-px bg-black" />
          </div>
          <Rule />
          <div className="h-[22px] shrink-0 bg-[#808080] pr-[9px] text-right leading-[22px] text-white">4800010000 ps</div>
          <div className="h-[17px] shrink-0 bg-white pr-[9px] text-right leading-[17px]">15600000 ps</div>
          <Rule />
          <div className="flex h-[19px] shrink-0 items-center border-t border-b border-[#696969] bg-[#f6f6f6] pr-px">
            <ScrollBtn dir="left" label="Scroll values left" /><Thumb className="w-4" />
            <span className="flex-1" /><ScrollBtn dir="right" label="Scroll values right" />
          </div>
        </Pane>

        <Pane className="flex-1">
          <div className="relative h-[18px] shrink-0 bg-black">
            <svg className="absolute inset-0 h-full w-full"><rect x={CURSOR - 1} y="1" width="3" height="17" fill="#ffd000" /></svg>
          </div>
          <Rule />
          <div className="relative flex-1 overflow-hidden bg-black"><WaveCanvas /></div>
          <Rule />
          <div className="relative h-[22px] shrink-0 overflow-hidden bg-black"><Timeline /></div>
          <div className="relative h-[17px] shrink-0 border-t border-[#808080] bg-black">
            <svg className="absolute inset-0 h-full w-full text-[11px]" shapeRendering="crispEdges">
              <rect x={CURSOR - 32.5} y=".500" width="66" height="15" fill="none" stroke="#ffd000" />
              <text x={CURSOR} y="12" textAnchor="middle" fill="#ffd000">15600000 ps</text>
            </svg>
          </div>
          <Rule />
          <div className="flex h-[19px] shrink-0 items-center border-t border-b border-[#696969] bg-[#c8c8c8] pr-px pl-px">
            <ScrollBtn dir="left" label="Scroll wave left" />
            <Thumb className="ml-[3px] w-[9px]"><span className="ml-px block h-full w-px bg-[#ffd000]" /></Thumb>
            <span className="flex-1" /><ScrollBtn dir="right" label="Scroll wave right" />
          </div>
        </Pane>

        <div className="flex w-[17px] shrink-0 flex-col">
          <div className="h-[18px] shrink-0 bg-[#808080]" />
          <Rule />
          <div className="flex flex-1 flex-col border-l border-[#696969]">
            <ScrollBtn dir="up" label="Scroll up" />
            <span className="mt-px mb-[2px] w-[14px] flex-1 border border-t-white border-l-white border-r-[#808080] border-b-[#808080] bg-[#efefef]" />
            <ScrollBtn dir="down" label="Scroll down" />
          </div>
          <Rule />
          <div className="h-[39px] shrink-0 bg-[#808080]" />
          <Rule />
          <div className="h-[19px] shrink-0 bg-[#808080]" />
        </div>
      </div>
    </section>
  );
}

function WindowTabs() {
  return (
    <div className="mt-px flex h-[22px] shrink-0 items-start border-t-2 border-[#222]">
      <nav className="flex">
        {TABS.map((tab) => (
          <div
            key={tab.name}
            className={clsx(
              'flex h-5 items-center rounded-b-[3px] border-r border-b-2 border-l border-black pr-[3px] pl-[5px]',
              tab.name === 'Wave' ? 'bg-[#efefef]' : 'bg-[#c8c8c8]',
            )}
          >
            <button type="button" className="flex items-center gap-1">
              <Icon n={tab.icon} size={15} />
              <span>{tab.name}</span>
            </button>
            <button type="button" aria-label={`Close ${tab.name}`} className="ml-[5px]">
              <svg width="9" height="9" viewBox="0 0 9 9" className="block"><path d="M1 1l7 7M8 1L1 8" stroke="#a4a4a4" strokeWidth="2" /></svg>
            </button>
          </div>
        ))}
      </nav>
      <div className="ml-auto flex">
        {['M5 1L1 5l4 4', 'M1 1l4 4-4 4'].map((d, i) => (
          <button
            key={d}
            type="button"
            aria-label={i ? 'Next tabs' : 'Previous tabs'}
            className="flex h-4 w-[11px] items-center justify-center border-r border-b border-[#696969]"
          >
            <svg width="7" height="10" fill="none" stroke="#333" strokeWidth="1.500"><path d={d} /></svg>
          </button>
        ))}
      </div>
    </div>
  );
}

function StatusBar() {
  return (
    <footer className="relative mt-[2px] flex h-[23px] shrink-0 items-center gap-1 pl-[2px]">
      <div className={clsx('flex h-[19px] w-[198px] items-center gap-[9px] pl-px', sunken)}>
        <span>Now: 4,800,010 ns</span>
        <span>Delta: 0</span>
      </div>
      <div className={clsx('flex h-[19px] flex-1 items-center pl-[2px]', sunken)}>/tst_Equalizer/i1/m [2:0]</div>
      <div className={clsx('flex h-[19px] w-[172px] items-center pl-[6px]', sunken)}>13091878 ps to 22965208 ps</div>
      <svg width="12" height="12" className="self-end" stroke="#808080"><path d="M0 11L11 0M4 11l7-7M8 11l3-3" /></svg>
      <span className="absolute right-4 bottom-0 font-['Liberation_Sans','Noto_Sans_CJK_SC',sans-serif] text-[19px] leading-[23px] whitespace-nowrap text-[#707070]/70">
        CSDN @梅尔基斯亚德
      </span>
    </footer>
  );
}

export default function App() {
  return (
    <div className="flex min-h-screen flex-col overflow-hidden bg-[#efefef] font-['DejaVu_Sans_Condensed','DejaVu_Sans',sans-serif] text-[11px] leading-[14px] text-black">
      <TitleBar />
      <nav className="mb-[2px] flex h-[18px] shrink-0 gap-px bg-white pt-px font-['Open_Sans','Noto_Sans',sans-serif] text-[12px]">
        {MENUS.map(([name, at]) => (
          <button key={name} type="button" className="px-[7px] leading-[17px]">
            {name.slice(0, at)}
            <span className="underline underline-offset-2">{name[at]}</span>
            {name.slice(at + 1)}
          </button>
        ))}
      </nav>
      <Toolbars />
      <WavePanel />
      <WindowTabs />
      <StatusBar />
      <div className="h-2 shrink-0 border-t border-[#b0b0b0] bg-linear-to-r from-[#d4e6ea] via-[#d4e8f0] to-[#dce4f4]" />
    </div>
  );
}
